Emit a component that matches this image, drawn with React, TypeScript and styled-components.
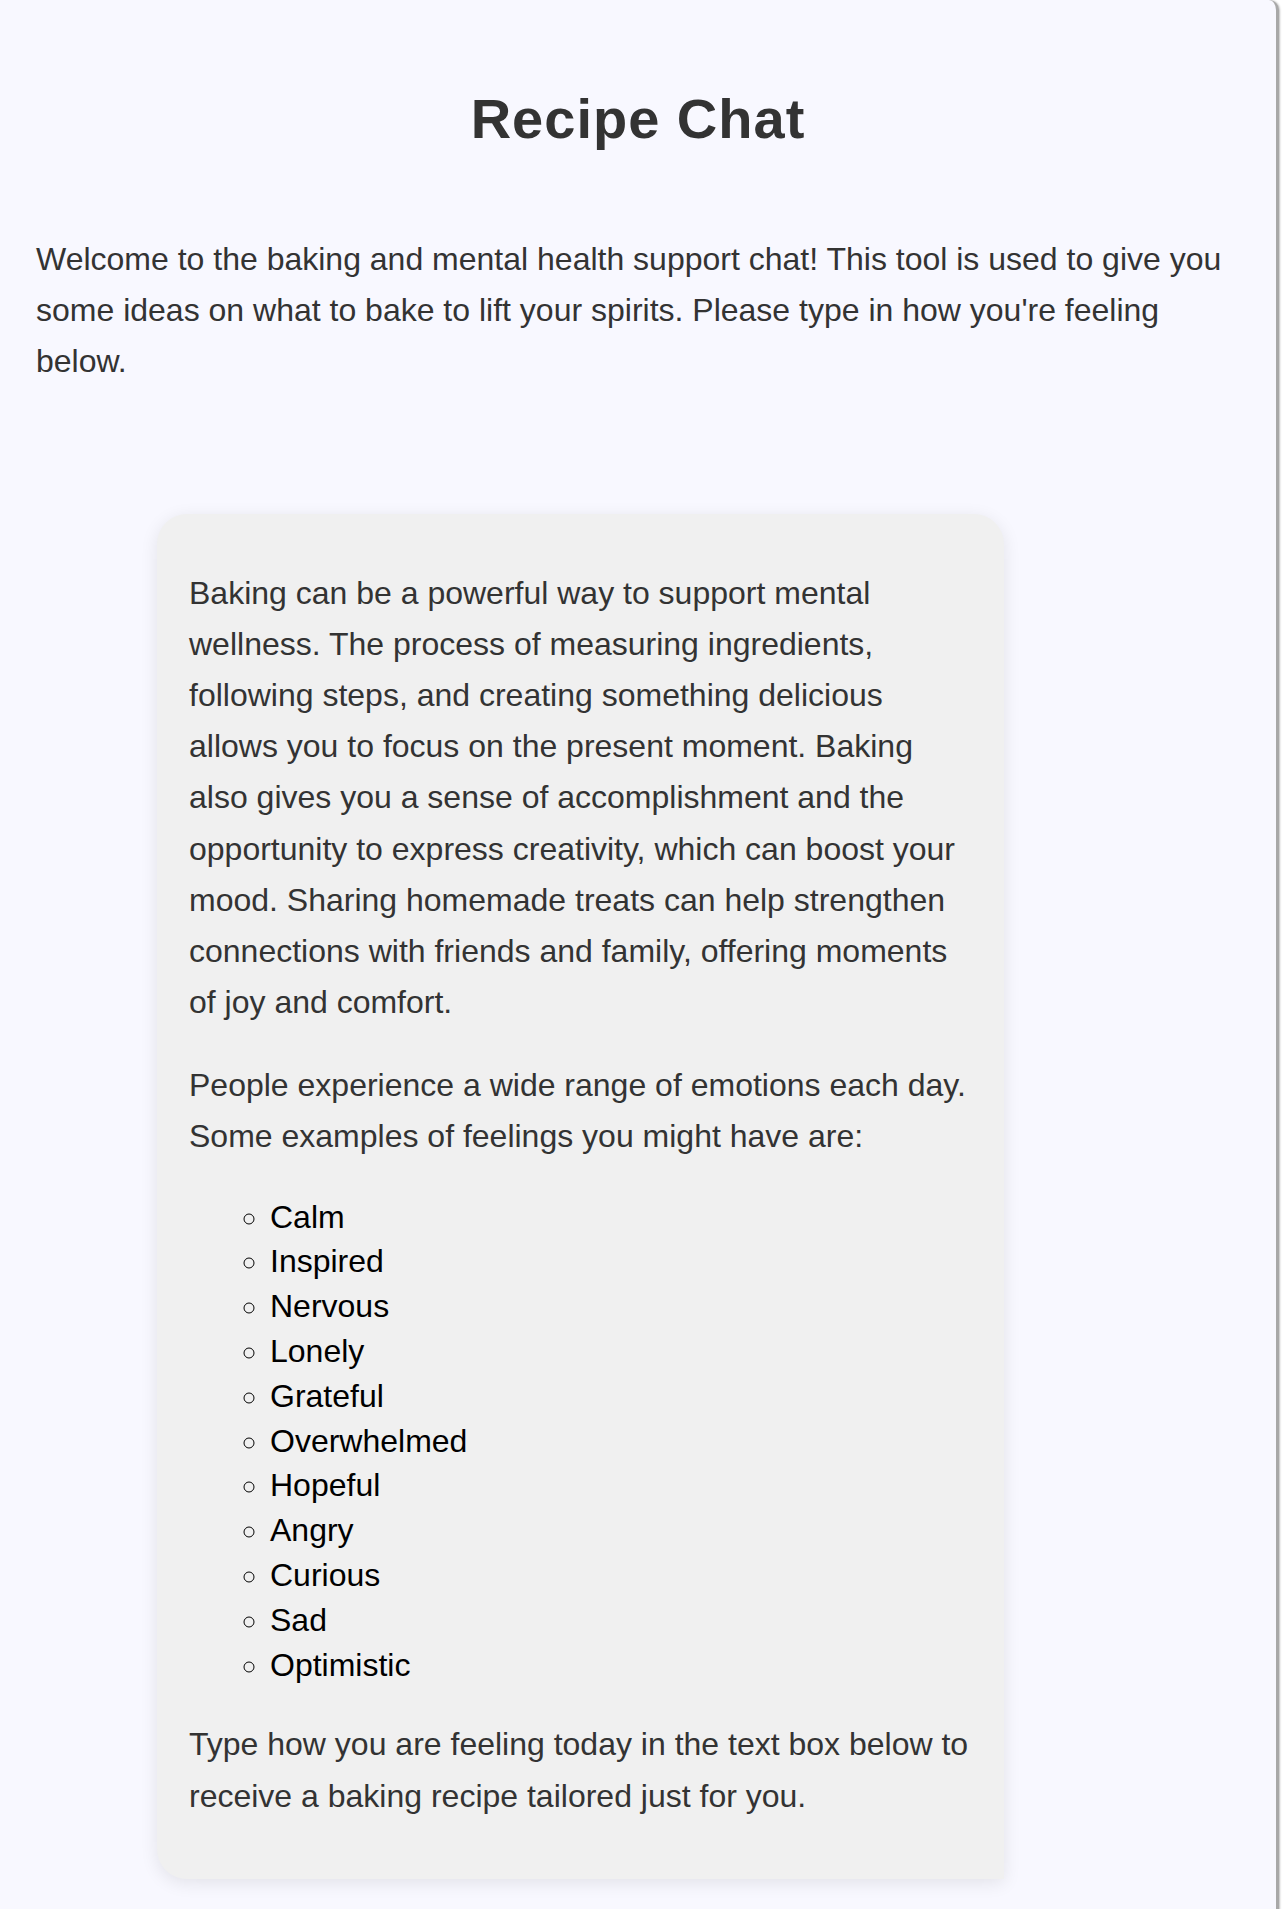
import styled, { createGlobalStyle } from 'styled-components';

const GlobalStyle = createGlobalStyle`
  html, body {
    margin: 0;
    padding: 0;
    background: #ffffff;
  }
  body {
    font-family: "Liberation Sans", Arial, sans-serif;
  }
`;

const Page = styled.div`
  box-sizing: border-box;
  width: 1279px;
  min-height: 1960px;
  padding: 0 36px;
  background: #f8f8ff;
  border-right: 3px solid #a8a8a8;
  border-top-right-radius: 10px;
  box-shadow: 1px 0 2px rgba(0, 0, 0, 0.25);
  overflow: hidden;
`;

const Title = styled.h1`
  margin: 86px 0 0;
  text-align: center;
  font-size: 56px;
  font-weight: 700;
  letter-spacing: 1px;
  line-height: normal;
  color: #333;
`;

const Intro = styled.p`
  margin: 83px 0 0;
  font-size: 32px;
  line-height: 1.6;
  color: #333;
`;

const ChatArea = styled.div`
  margin-top: 126px;
  padding-left: 121px;
`;

const Bubble = styled.div`
  box-sizing: border-box;
  width: 847px;
  padding: 22px 32px 25px;
  background: #f0f0f0;
  border-radius: 30px 30px 0 30px;
  box-shadow: 0 4px 18px rgba(0, 0, 0, 0.09);
`;

const Text = styled.p`
  margin: 32px 0;
  font-size: 32px;
  line-height: 1.6;
  color: #333;
`;

const FeelingList = styled.ul`
  margin: 32px 0;
  padding-left: 81px;
  list-style: circle;
  font-size: 32px;
  line-height: 1.4;
  color: #000;
`;

const feelings = [
  'Calm',
  'Inspired',
  'Nervous',
  'Lonely',
  'Grateful',
  'Overwhelmed',
  'Hopeful',
  'Angry',
  'Curious',
  'Sad',
  'Optimistic',
];

export default function App() {
  return (
    <>
      <GlobalStyle />
      <Page>
        <Title>Recipe Chat</Title>
        <Intro>
          Welcome to the baking and mental health support chat! This tool is used to give you
          some ideas on what to bake to lift your spirits. Please type in how you're feeling
          below.
        </Intro>
        <ChatArea>
          <Bubble>
            <Text>
              Baking can be a powerful way to support mental wellness. The process of measuring
              ingredients, following steps, and creating something delicious allows you to focus
              on the present moment. Baking also gives you a sense of accomplishment and the
              opportunity to express creativity, which can boost your mood. Sharing homemade
              treats can help strengthen connections with friends and family, offering moments of
              joy and comfort.
            </Text>
            <Text>
              People experience a wide range of emotions each day. Some examples of feelings you
              might have are:
            </Text>
            <FeelingList>
              {feelings.map(f => (
                <li key={f}>{f}</li>
              ))}
            </FeelingList>
            <Text>
              Type how you are feeling today in the text box below to receive a baking recipe
              tailored just for you.
            </Text>
          </Bubble>
        </ChatArea>
      </Page>
    </>
  );
}
